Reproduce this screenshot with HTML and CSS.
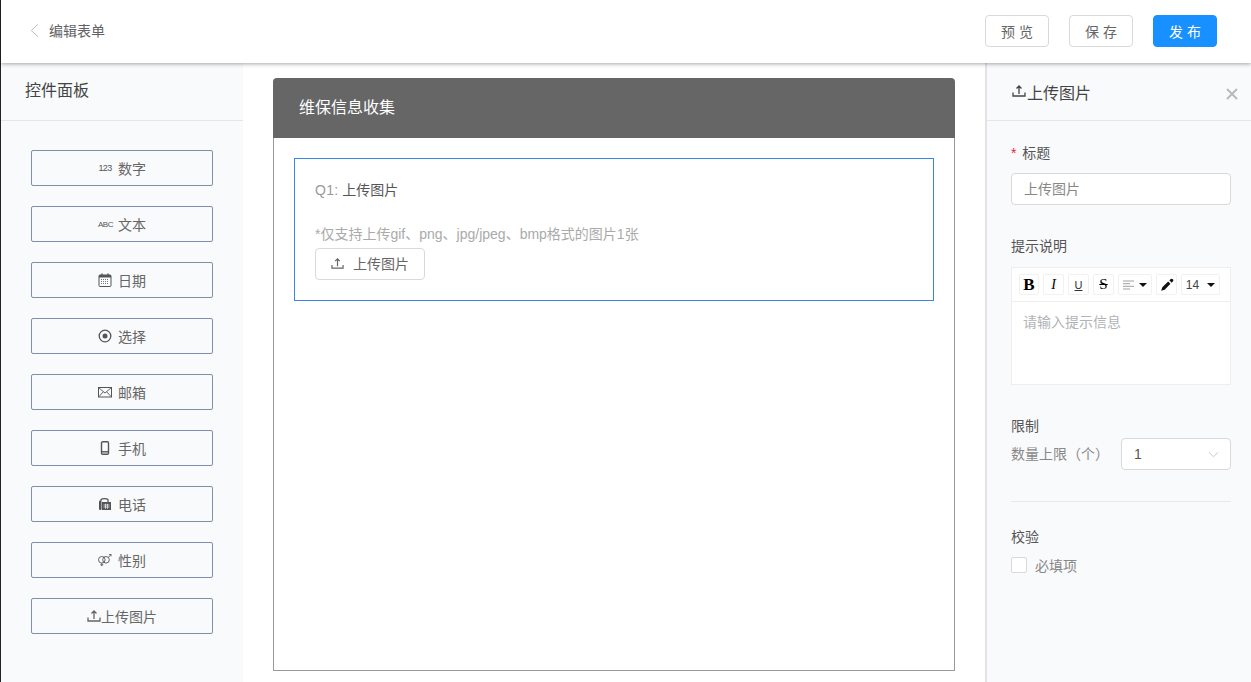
FILE: index.html
```html
<!DOCTYPE html>
<html lang="zh">
<head>
<meta charset="utf-8">
<title>编辑表单</title>
<link rel="stylesheet" href="styles.css">
</head>
<body>
<svg class="defs" width="0" height="0" aria-hidden="true">
  <symbol id="upload" viewBox="0 0 14 14">
    <path d="M1 8.500v3.500h12V8.500M7 10V2M4.500 4.500L7 2l2.500 2.500" fill="none" stroke="currentColor" stroke-width="1.300"/>
  </symbol>
</svg>
<div class="app">
  <header class="topbar">
    <div class="back">
      <svg class="back-icon" viewBox="0 0 10 16"><path d="M9 1L1.500 8 9 15" fill="none" stroke="#b5b5b5" stroke-width="1"/></svg>
      <span>编辑表单</span>
    </div>
    <div class="actions">
      <button class="btn">预 览</button>
      <button class="btn">保 存</button>
      <button class="btn primary">发 布</button>
    </div>
  </header>
  <div class="main">
    <aside class="palette">
      <div class="palette-title">控件面板</div>
      <div class="palette-list">
        <div class="ctl"><span class="tiny">123</span><span>数字</span></div>
        <div class="ctl"><span class="tiny abc">ABC</span><span>文本</span></div>
        <div class="ctl">
          <svg class="ico" viewBox="0 0 14 14"><rect x="1" y="2" width="12" height="11.500" rx="1" fill="none" stroke="#555" stroke-width="1"/><rect x="1" y="2" width="12" height="2.500" fill="#555"/><path d="M4 0.500v3M10 0.500v3" stroke="#555" stroke-width="1.400"/><path d="M3 6.500h8M3 8.500h8M3 10.500h8" stroke="#777" stroke-width="1" stroke-dasharray="1 1"/></svg>
          <span>日期</span>
        </div>
        <div class="ctl">
          <svg class="ico" viewBox="0 0 14 14"><circle cx="7" cy="7" r="5.800" fill="none" stroke="#555" stroke-width="1.300"/><circle cx="7" cy="7" r="2.500" fill="#555"/></svg>
          <span>选择</span>
        </div>
        <div class="ctl">
          <svg class="ico" viewBox="0 0 14 14"><rect x="0.500" y="2.500" width="13" height="9.500" fill="none" stroke="#555" stroke-width="1"/><path d="M1 3l6 5 6-5M1 11.500l4.300-4.700M13 11.500L8.700 6.800" fill="none" stroke="#555" stroke-width="0.900"/></svg>
          <span>邮箱</span>
        </div>
        <div class="ctl">
          <svg class="ico" viewBox="0 0 14 14"><rect x="3.500" y="0.800" width="7" height="12.400" rx="1.200" fill="none" stroke="#555" stroke-width="1.400"/><path d="M3.500 10.800h7" stroke="#555" stroke-width="1.400"/></svg>
          <span>手机</span>
        </div>
        <div class="ctl">
          <svg class="ico" viewBox="0 0 14 14"><rect x="1" y="3.500" width="2.500" height="9.500" rx="1" fill="#555"/><rect x="4" y="5" width="9" height="8" fill="#555"/><path d="M3 4V2.500a3.800 1.500 0 0 1 7 0V5" fill="none" stroke="#555" stroke-width="1.200"/><path d="M5.500 8h6M5.500 10h6M7.500 6.800v5M9.500 6.800v5" stroke="#f9fafc" stroke-width="0.700"/></svg>
          <span>电话</span>
        </div>
        <div class="ctl">
          <svg class="ico" viewBox="0 0 14 14"><circle cx="3.800" cy="6.800" r="3.300" fill="none" stroke="#555" stroke-width="0.900"/><circle cx="8" cy="6.800" r="3.300" fill="none" stroke="#555" stroke-width="0.900"/><path d="M3.800 10.100v3M2.300 11.800h3M10.500 4.200L13 1.700M11.200 1.500h1.800v1.800" fill="none" stroke="#555" stroke-width="0.900"/></svg>
          <span>性别</span>
        </div>
        <div class="ctl tight">
          <svg class="ico upload-ico"><use href="#upload"/></svg>
          <span>上传图片</span>
        </div>
      </div>
    </aside>
    <main class="canvas">
      <section class="form">
        <div class="form-head">维保信息收集</div>
        <div class="form-body">
          <div class="question">
            <div class="q-title"><span class="q-num">Q1:</span> 上传图片</div>
            <div class="q-hint">*仅支持上传gif、png、jpg/jpeg、bmp格式的图片1张</div>
            <button class="upload-btn">
              <svg class="upload-small"><use href="#upload"/></svg>
              <span>上传图片</span>
            </button>
          </div>
        </div>
      </section>
    </main>
    <aside class="props">
      <div class="props-head">
        <div class="props-title"><svg class="head-ico"><use href="#upload"/></svg><span>上传图片</span></div>
        <svg class="close" viewBox="0 0 12 12"><path d="M1 1l10 10M11 1L1 11" stroke="#b9b9b9" stroke-width="2"/></svg>
      </div>
      <div class="props-body">
        <div class="label label-title"><span class="req">*</span> 标题</div>
        <div class="input">上传图片</div>
        <div class="label label-hint">提示说明</div>
        <div class="editor">
          <div class="toolbar">
            <span class="tool bold">B</span>
            <span class="tool ital">I</span>
            <span class="tool under">U</span>
            <span class="tool strike">S</span>
            <span class="tool wide">
              <svg class="align" viewBox="0 0 11 10"><path d="M0 1h11M0 3.700h7M0 6.300h11M0 9h7" stroke="#888" stroke-width="0.800"/></svg>
              <i class="caret"></i>
            </span>
            <span class="tool">
              <svg class="pen" viewBox="0 0 12 12"><path d="M1 11l1-3 5-5 2 2-5 5zM8 2l1-1c.6-.6 1.400-.6 2 0s.6 1.400 0 2l-1 1z" fill="#111"/></svg>
            </span>
            <span class="tool size">14<i class="caret"></i></span>
          </div>
          <div class="editor-body">请输入提示信息</div>
        </div>
        <div class="label label-limit">限制</div>
        <div class="limit-row">
          <span class="limit-label">数量上限（个）</span>
          <div class="select"><span>1</span><svg class="chev" viewBox="0 0 12 7"><path d="M1 1l5 5 5-5" fill="none" stroke="#c0c4cc" stroke-width="1"/></svg></div>
        </div>
        <div class="divider"></div>
        <div class="label label-check">校验</div>
        <label class="check"><span class="box"></span><span>必填项</span></label>
      </div>
    </aside>
  </div>
</div>
</body>
</html>
```
FILE: styles.css
```css
* { box-sizing: border-box; }
html, body { margin: 0; height: 100%; overflow: hidden; }
body {
  font-family: "Liberation Sans", "Noto Sans CJK SC", sans-serif;
  font-size: 14px;
  color: #555;
  background: #fff;
}
.defs { position: absolute; }
.app {
  height: 682px;
  border-left: 1px solid #222;
  display: flex;
  flex-direction: column;
}
.topbar {
  height: 63px;
  flex: none;
  background: #fff;
  box-shadow: 0 1px 4px rgba(0,0,0,.35);
  display: flex;
  align-items: center;
  justify-content: space-between;
  padding: 1px 34px 2px 29px;
  position: relative;
  z-index: 2;
}
.back { display: flex; align-items: center; gap: 10px; font-size: 14px; color: #606266; margin-bottom: 2px; }
.back-icon { width: 9px; height: 15px; }
.actions { display: flex; gap: 20px; }
.btn {
  width: 64px;
  height: 32px;
  border: 1px solid #d9d9d9;
  border-radius: 4px;
  background: #fff;
  color: #666;
  font: 14px "Liberation Sans", "Noto Sans CJK SC", sans-serif;
  padding: 0;
}
.primary { background: #1890ff; border-color: #1890ff; color: #fff; }
.main { flex: 1; display: flex; min-height: 0; }
.palette { width: 242px; flex: none; background: #f9fafc; }
.palette-title {
  height: 58px;
  border-bottom: 1px solid #e6e6e6;
  padding: 16px 0 0 24px;
  font-size: 16px;
  line-height: 24px;
  color: #444;
}
.palette-list { display: flex; flex-direction: column; gap: 20px; padding: 29px 30px 0; }
.ctl {
  height: 36px;
  border: 1px solid #7f90aa;
  border-radius: 2px;
  display: flex;
  align-items: center;
  justify-content: center;
  gap: 6px;
  color: #666;
  font-size: 14px;
}
.ctl.tight { gap: 0; }
.tiny { width: 14px; font-size: 9px; text-align: center; letter-spacing: -0.6px; color: #555; }
.abc { font-size: 8px; letter-spacing: -0.5px; }
.ico { width: 14px; height: 14px; flex: none; }
.upload-ico { color: #666; }
.canvas { flex: 1; padding: 15px 30px 11px; background: #fff; min-width: 0; }
.form { height: 100%; display: flex; flex-direction: column; }
.form-head {
  height: 60px;
  flex: none;
  background: #666;
  border-radius: 4px 4px 0 0;
  color: #fff;
  font-size: 16px;
  line-height: 60px;
  padding-left: 26px;
}
.form-body {
  flex: 1;
  border: 1px solid #999;
  border-top: 0;
  padding: 20px 20px 0;
}
.question {
  height: 143px;
  border: 1px solid #3a84e8;
  padding: 20px;
}
.q-title { line-height: 22px; font-size: 14px; color: #555; }
.q-num { color: #999; letter-spacing: .3px; }
.q-hint { margin-top: 22px; line-height: 22px; font-size: 14px; color: #aaa; }
.upload-btn {
  display: flex;
  align-items: center;
  justify-content: center;
  gap: 9px;
  width: 110px;
  height: 32px;
  margin-top: 3px;
  border: 1px solid #d9d9d9;
  border-radius: 4px;
  background: #fff;
  color: #666;
  font: 14px "Liberation Sans", "Noto Sans CJK SC", sans-serif;
  padding: 0 0 3px 0;
}
.upload-small { width: 13px; height: 13px; color: #666; margin-top: 2px; }
.props {
  width: 266px;
  flex: none;
  border-left: 2px solid #e3e3e3;
  background: #f9fafc;
}
.props-head {
  height: 58px;
  border-bottom: 1px solid #e6e6e6;
  display: flex;
  align-items: center;
  justify-content: space-between;
  padding: 1px 13px 0 24px;
}
.props-title { display: flex; align-items: center; font-size: 16px; color: #444; }
.head-ico { width: 16px; height: 14px; color: #444; margin-bottom: 3px; }
.close { width: 12px; height: 12px; margin-top: 3px; }
.props-body { padding: 0 20px 0 24px; }
.label { font-size: 14px; line-height: 20px; color: #555; }
.label-title { margin-top: 22px; }
.req { color: #f5222d; margin-right: 2px; }
.input {
  margin-top: 10px;
  height: 32px;
  border: 1px solid #d9d9d9;
  border-radius: 4px;
  background: #fff;
  padding-left: 12px;
  line-height: 30px;
  color: #888;
  font-size: 14px;
}
.label-hint { margin-top: 31px; }
.editor { margin-top: 11px; height: 118px; border: 1px solid #eeeeee; background: #fff; }
.toolbar {
  height: 34px;
  border-bottom: 1px solid #eeeeee;
  display: flex;
  align-items: center;
  gap: 4px;
  padding: 0 7px;
}
.tool {
  height: 21px;
  min-width: 21px;
  border: 1px solid #f1f1f1;
  border-radius: 2px;
  background: #fff;
  display: flex;
  align-items: center;
  justify-content: center;
  color: #000;
  font-size: 12px;
}
.bold { min-width: 20px; font: bold 17px "Liberation Serif", serif; }
.ital { font: italic 14px "Liberation Serif", serif; }
.under { text-decoration: underline; font-size: 11px; color: #333; }
.strike { text-decoration: line-through; font: 15px "Liberation Serif", serif; }
.wide { width: 34px; gap: 5px; }
.size { width: 39px; gap: 8px; color: #444; }
.align { width: 11px; height: 10px; }
.pen { width: 14px; height: 14px; }
.caret {
  display: block;
  width: 0;
  height: 0;
  border: 4px solid transparent;
  border-top-color: #111;
  border-bottom: 0;
}
.editor-body { padding: 10px 11px; line-height: 20px; color: #b0b3b8; font-size: 14px; }
.label-limit { margin-top: 31px; }
.limit-row { display: flex; align-items: center; justify-content: space-between; margin-top: 2px; }
.limit-label { color: #888; font-size: 14px; white-space: nowrap; margin-bottom: 3px; }
.select {
  width: 110px;
  height: 32px;
  border: 1px solid #d9d9d9;
  border-radius: 4px;
  background: #fff;
  display: flex;
  align-items: center;
  justify-content: space-between;
  padding: 0 11px 0 12px;
  color: #555;
}
.chev { width: 11px; height: 7px; }
.divider { margin-top: 31px; height: 1px; background: #e8e8e8; }
.label-check { margin-top: 25px; }
.check { display: flex; align-items: center; gap: 8px; margin-top: 8px; color: #888; font-size: 14px; }
.box { width: 16px; height: 16px; border: 1px solid #d9d9d9; border-radius: 2px; background: #fff; }
```
